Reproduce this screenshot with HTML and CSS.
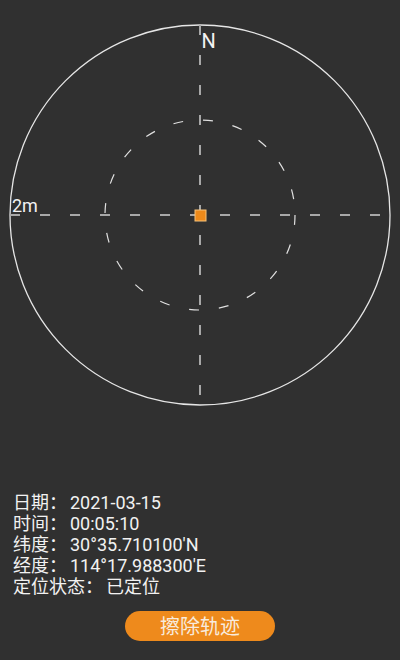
FILE: index.html
```html
<!DOCTYPE html>
<html lang="zh-CN">
<head>
    <meta charset="UTF-8">
    <meta name="viewport" content="width=device-width, initial-scale=1.0">
    <title>定位</title>
    <link rel="stylesheet" href="styles.css">
</head>
<body>
    <div class="compass">
        <svg width="400" height="430" viewBox="0 0 400 430">
            <circle class="ring" cx="200" cy="215" r="190"/>
            <circle class="ring-dash" cx="200" cy="215" r="95"/>
            <line class="axis" x1="200" y1="25" x2="200" y2="405"/>
            <line class="axis" x1="10" y1="215" x2="390" y2="215"/>
            <text class="label-n" x="201.5" y="47.5">N</text>
            <text class="label-scale" x="12" y="212">2m</text>
            <rect class="point" x="195" y="210" width="11" height="11"/>
        </svg>
    </div>

    <div class="info">
        <p>日期： 2021-03-15</p>
        <p>时间： 00:05:10</p>
        <p>纬度： 30°35.710100'N</p>
        <p>经度： 114°17.988300'E</p>
        <p>定位状态： 已定位</p>
    </div>

    <div class="actions">
        <button>擦除轨迹</button>
    </div>
</body>
</html>
```

FILE: styles.css
```css
body {
    margin: 0;
    background-color: #303030;
    color: #f2f2f2;
    font-family: Roboto, "Noto Sans CJK SC", sans-serif;
}
.compass svg {
    display: block;
}
.ring {
    fill: none;
    stroke: #e6e6e6;
    stroke-width: 1.3;
}
.ring-dash {
    fill: none;
    stroke: #e0e0e0;
    stroke-width: 1.2;
    stroke-dasharray: 10 20;
}
.axis {
    stroke: #a8a8a8;
    stroke-width: 2;
    stroke-dasharray: 10 20;
}
.label-n {
    fill: #f2f2f2;
    font-size: 20px;
}
.label-scale {
    fill: #f2f2f2;
    font-size: 18px;
}
.point {
    fill: #ee8a1a;
    stroke: #f6c27a;
    stroke-width: 1;
}
.info {
    padding: 62px 0 0 13px;
}
.info p {
    margin: 0;
    font-size: 18px;
    line-height: 21px;
    word-spacing: -1.5px;
}
.actions {
    margin-top: 14px;
    text-align: center;
}
button {
    width: 150px;
    height: 30px;
    border: none;
    border-radius: 15px;
    background-color: #ee8a1c;
    color: #f8ebdd;
    font-family: "Noto Sans CJK SC", sans-serif;
    font-size: 20px;
    line-height: 30px;
    padding: 0;
}
```
